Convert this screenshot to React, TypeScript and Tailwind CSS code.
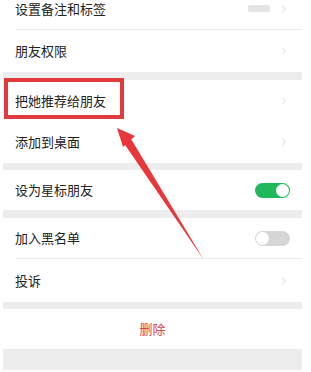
import { ChevronRight } from 'lucide-react';

const font = { fontFamily: '"Noto Sans CJK SC", "Noto Sans", sans-serif' };

function Chevron() {
  return <ChevronRight className="w-[12px] h-[12px] text-[#c8c8c8]" strokeWidth={1.4} />;
}

function Toggle({ on }: { on: boolean }) {
  return on ? (
    <div className="w-[35px] h-[15px] rounded-full bg-[#1fb85a] flex items-center justify-end pr-[1px]">
      <div className="w-[13px] h-[13px] rounded-full bg-white" />
    </div>
  ) : (
    <div className="w-[35px] h-[15px] rounded-full bg-[#d6d6d6] flex items-center pl-[1px]">
      <div className="w-[13px] h-[13px] rounded-full bg-white" />
    </div>
  );
}

function Row({
  label,
  h = 'h-[42px]',
  divider = false,
  right,
}: {
  label: string;
  h?: string;
  divider?: boolean;
  right?: React.ReactNode;
}) {
  return (
    <div className={`bg-white pl-[12px] ${h}`}>
      <div
        className={`h-full flex items-center justify-between pr-[12px] ${
          divider ? 'border-b border-[#ececec]' : ''
        }`}
      >
        <span className="text-[13px] text-[#222]">{label}</span>
        {right ?? <Chevron />}
      </div>
    </div>
  );
}

function Band({ h }: { h: string }) {
  return <div className={`bg-[#ededed] ${h}`} />;
}

export default function App() {
  return (
    <div className="w-[311px] h-[372px] bg-white overflow-hidden relative" style={font}>
      <div className="ml-[3px] w-[299px] -mt-[12px]">
        <Row
          label="设置备注和标签"
          divider
          right={
            <div className="flex items-center gap-[8px]">
              <div className="w-[22px] h-[7px] rounded-[2px] bg-[#e4e4e4]" />
              <Chevron />
            </div>
          }
        />
        <Row label="朋友权限" />
        <Band h="h-[8px]" />
        <Row label="把她推荐给朋友" h="h-[41px]" />
        <Row label="添加到桌面" />
        <Band h="h-[7px]" />
        <Row label="设为星标朋友" h="h-[40px]" right={<Toggle on />} />
        <Band h="h-[8px]" />
        <Row label="加入黑名单" h="h-[41px]" divider right={<Toggle on={false} />} />
        <Row label="投诉" h="h-[43px]" />
        <Band h="h-[7px]" />
        <div className="h-[40px] flex items-center justify-center">
          <span className="text-[13px] text-[#d8434c]">删除</span>
        </div>
        <Band h="h-[21px]" />
      </div>

      {/* red highlight box */}
      <div className="absolute left-[4px] top-[78px] w-[120px] h-[41px] border-[4px] border-[#e23b3f]" />

      {/* red arrow */}
      <svg className="absolute left-0 top-0" width="311" height="372" viewBox="0 0 311 372">
        <polygon points="204,260 121,139 128,134" fill="#e8363b" />
        <polygon points="117,128 135,136 123,147" fill="#e8363b" />
      </svg>
    </div>
  );
}
